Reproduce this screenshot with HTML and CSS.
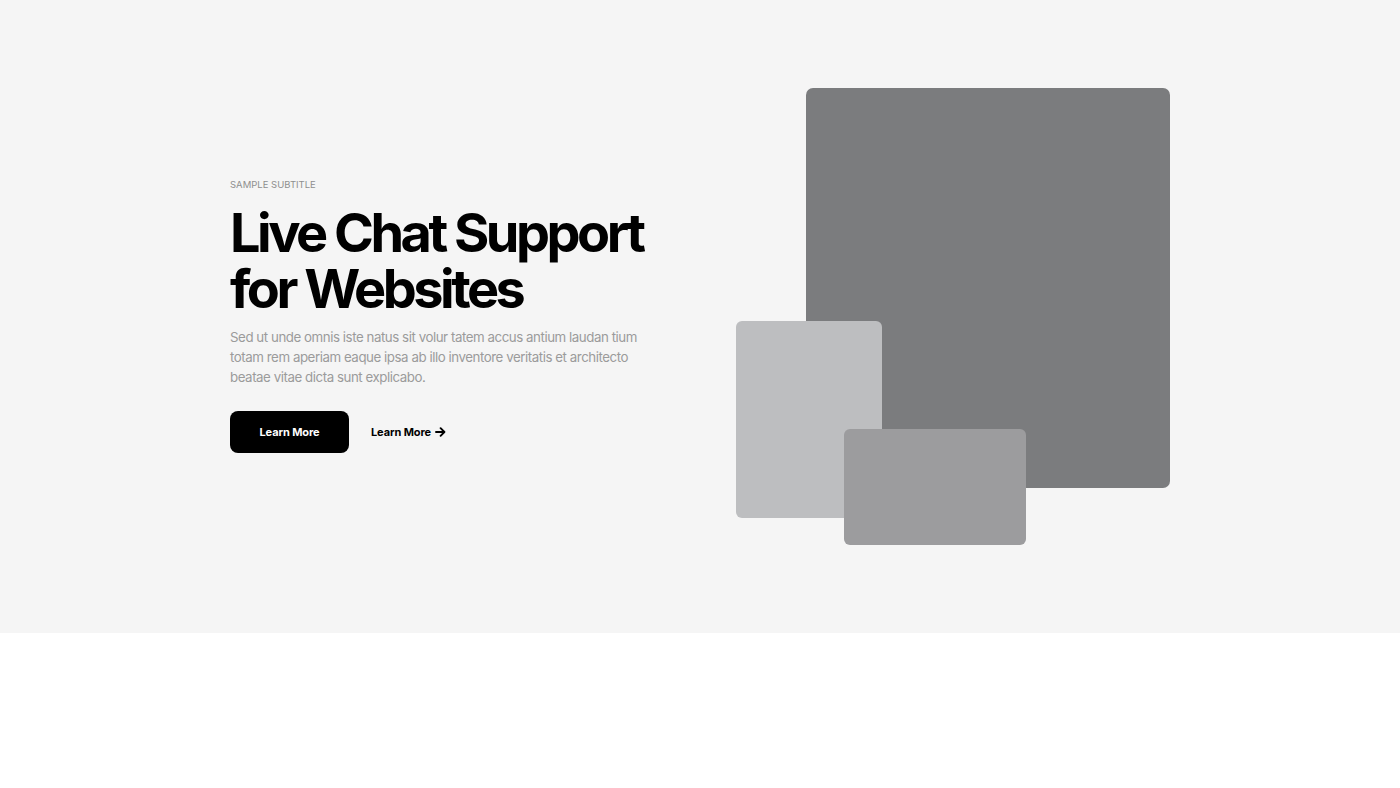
FILE: index.html
```html
<!DOCTYPE html>
<html lang="en">
<head>
<meta charset="utf-8">
<title>Live Chat Support for Websites</title>
<link rel="stylesheet" href="styles.css">
</head>
<body>
<section class="hero">
  <div class="container">
    <div class="copy">
      <p class="subtitle">Sample Subtitle</p>
      <h1 class="title">Live Chat Support<br>for Websites</h1>
      <p class="lead">Sed ut unde omnis iste natus sit volur tatem accus antium laudan tium totam rem aperiam eaque ipsa ab illo inventore veritatis et architecto beatae vitae dicta sunt explicabo.</p>
      <div class="actions">
        <a class="btn" href="#">Learn More</a>
        <a class="link" href="#">Learn More
          <svg class="arrow" width="11" height="10" viewBox="0 0 11 10" aria-hidden="true"><path d="M1 5h8.2M5.6 1.2L9.4 5 5.6 8.8" fill="none" stroke="#000" stroke-width="1.9" stroke-linecap="round" stroke-linejoin="round"/></svg>
        </a>
      </div>
    </div>
    <div class="media">
      <div class="shape shape-big"></div>
      <div class="shape shape-light"></div>
      <div class="shape shape-mid"></div>
    </div>
  </div>
</section>
<section class="after"></section>
</body>
</html>
```
FILE: styles.css
```css
* { box-sizing: border-box; }
html, body { margin: 0; padding: 0; }
body {
  font-family: Inter, "Noto Sans", "Liberation Sans", sans-serif;
  background: #ffffff;
  color: #000;
}
.hero {
  background: #f5f5f5;
  padding: 88px 0;
  height: 633px;
}
.container {
  width: 940px;
  margin: 0 auto;
  display: flex;
  justify-content: space-between;
  align-items: center;
}
.copy {
  width: 460px;
  padding-bottom: 3px;
}
.subtitle {
  margin: 0 0 13px;
  font-size: 9.5px;
  line-height: 14px;
  text-transform: uppercase;
  color: #8e8e8e;
  letter-spacing: 0;
}
.title {
  margin: 0;
  font-size: 54px;
  line-height: 56px;
  font-weight: 700;
  letter-spacing: -3.5px;
  white-space: nowrap;
  color: #000;
}
.lead {
  margin: 10px 0 0;
  width: 415px;
  font-size: 13.3px;
  line-height: 20px;
  color: #9b9b9b;
  letter-spacing: -0.45px;
}
.actions {
  margin-top: 24px;
  display: flex;
  align-items: center;
  gap: 22px;
}
.btn {
  display: inline-flex;
  align-items: center;
  justify-content: center;
  width: 119px;
  height: 42px;
  background: #000;
  color: #fff;
  border-radius: 8px;
  font-size: 11px;
  font-weight: 700;
  text-decoration: none;
  letter-spacing: -0.1px;
}
.link {
  display: inline-flex;
  align-items: center;
  gap: 4px;
  color: #000;
  font-size: 11px;
  font-weight: 700;
  text-decoration: none;
  letter-spacing: -0.1px;
}
.media {
  position: relative;
  width: 434px;
  height: 457px;
}
.shape { position: absolute; }
.shape-big {
  left: 70px; top: 0;
  width: 364px; height: 400px;
  background: #7b7c7e;
  border-radius: 7px;
}
.shape-light {
  left: 0; top: 233px;
  width: 146px; height: 197px;
  background: #bdbec0;
  border-radius: 6px;
}
.shape-mid {
  left: 108px; top: 341px;
  width: 182px; height: 116px;
  background: #9c9c9e;
  border-radius: 6px;
}
.after { height: 155px; background: #fff; }
```
